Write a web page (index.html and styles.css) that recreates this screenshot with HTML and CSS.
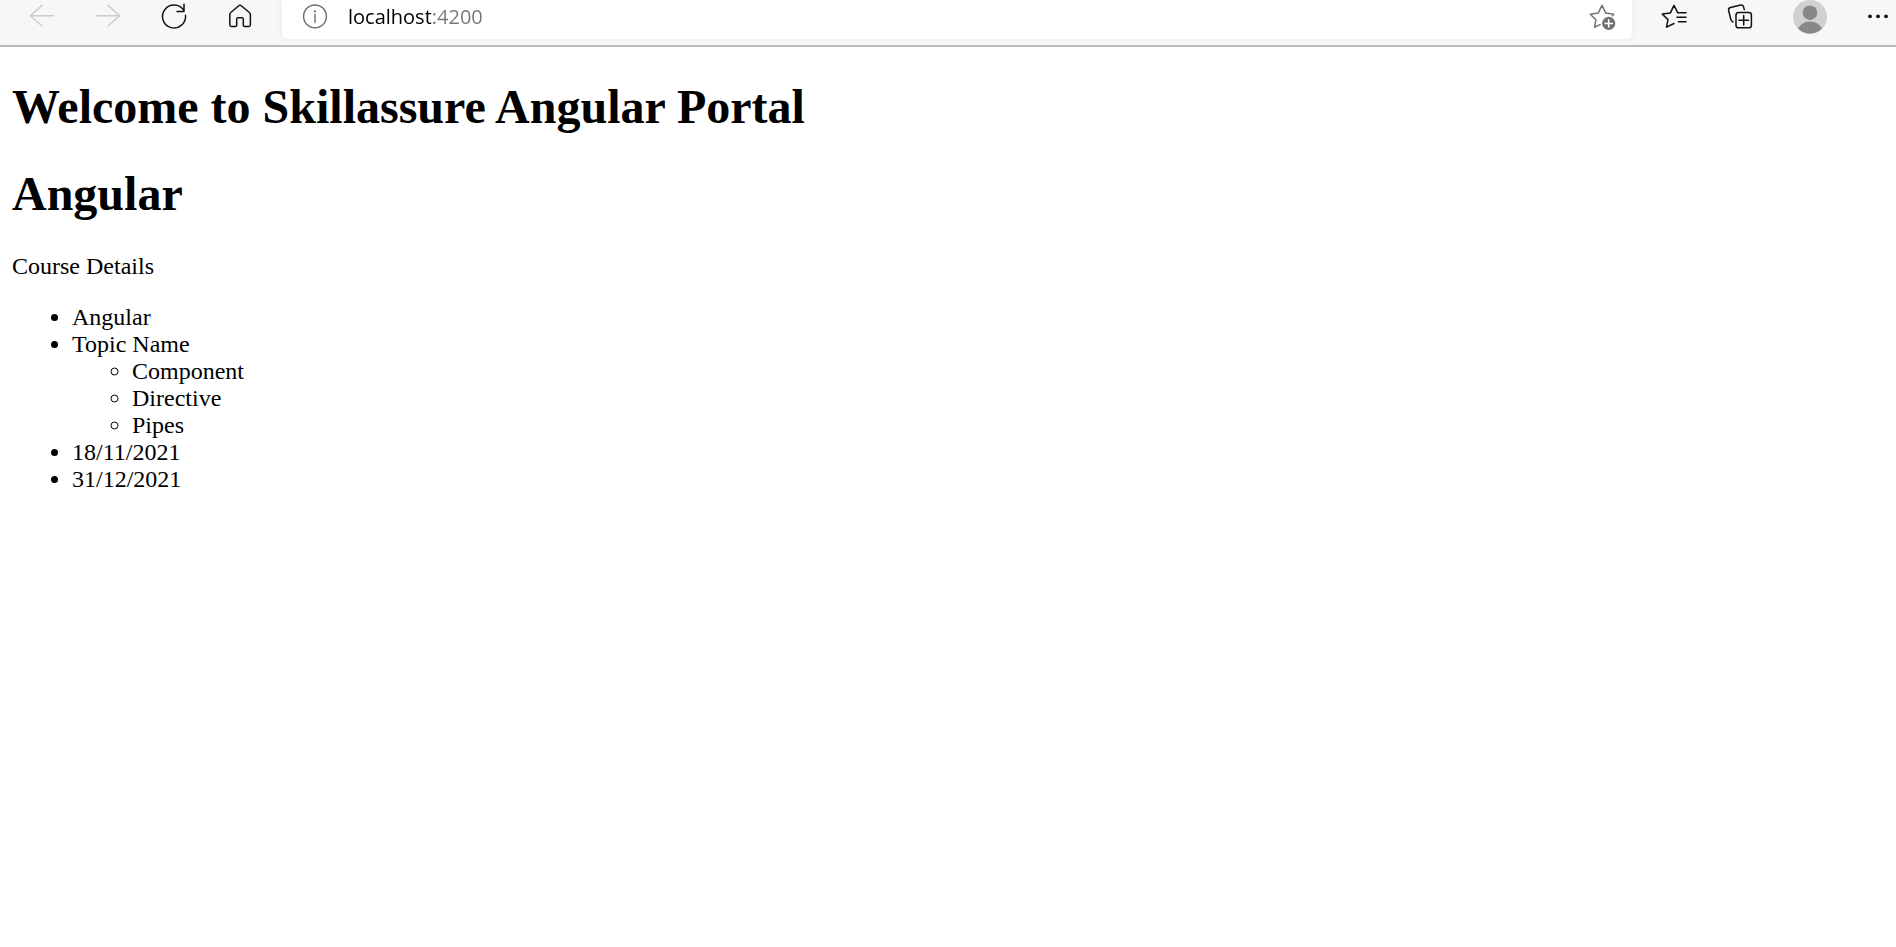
FILE: index.html
```
<!DOCTYPE html>
<html lang="en">
<head>
<meta charset="utf-8">
<title>Skillassure Angular Portal</title>
<link rel="stylesheet" href="styles.css">
</head>
<body>
<header class="toolbar">
  <nav class="nav-buttons" aria-label="Navigation">
    <button class="tool" type="button" aria-label="Back" disabled>
      <svg class="icon" viewBox="0 0 36 32"><path d="M29.5 15.7H6.3M18 5.4L6.3 15.7 18 26"/></svg>
    </button>
    <button class="tool" type="button" aria-label="Forward" disabled>
      <svg class="icon" viewBox="0 0 36 32"><path d="M6.3 15.7h23.3M18 5.4l11.7 10.3L18 26"/></svg>
    </button>
    <button class="tool" type="button" aria-label="Refresh">
      <svg class="icon" viewBox="0 0 36 32"><path d="M29.5 15.2A11.5 11.5 0 1 1 27.7 10.2M28 4.2v7.2h-7"/></svg>
    </button>
    <button class="tool" type="button" aria-label="Home">
      <svg class="icon" viewBox="0 0 36 32"><path d="M17.1 5.5q.9-.7 1.8 0l8.5 7q1 .8 1 2v10.2q0 1.7-1.7 1.7h-3.9q-1.5 0-1.5-1.5v-5.6q0-1.5-1.5-1.5h-3.6q-1.5 0-1.5 1.5v5.6q0 1.5-1.5 1.5H9.5q-1.7 0-1.7-1.7V14.5q0-1.2 1-2z"/></svg>
    </button>
  </nav>
  <div class="address">
    <button class="tool muted" type="button" aria-label="View site information">
      <svg class="icon" viewBox="0 0 36 32"><circle cx="18" cy="16.4" r="11.4"/><path d="M18 14.6v7.6"/><circle class="solid" cx="18" cy="11.4" r="1.1"/></svg>
    </button>
    <input class="url" type="text" aria-label="Address" value="localhost:4200" spellcheck="false">
    <button class="tool muted" type="button" aria-label="Add this page to favorites">
      <svg class="icon" viewBox="0 0 36 32"><path d="M28.4 15.8l1.3-1.6-7.9-1.1L18 5.4l-3.8 7.7-7.9 1.1 5.6 5.6-1.4 7.5 5.6-2.7"/><circle class="solid" cx="24.7" cy="23.4" r="6.6"/><path class="plus" d="M24.7 19.8V27M21.1 23.4h7.2"/></svg>
    </button>
  </div>
  <div class="actions">
    <button class="tool" type="button" aria-label="Favorites">
      <svg class="icon" viewBox="0 0 36 32"><path d="M30 12.8h-8.2L18 5.4l-3.6 7.5-8.1 1.2 5.7 5.5-1.5 7.6 7.5-3.7M21 17.3h9M22.5 21.7H30"/></svg>
    </button>
    <button class="tool" type="button" aria-label="Collections">
      <svg class="icon" viewBox="0 0 36 32"><rect x="12" y="12.4" width="15.4" height="15.4" rx="2.6"/><path d="M19.7 15.4v9.6M14.9 20.2h9.6M20.3 9.6l-.9-3.1q-.6-2-2.6-1.5L6.5 7.4q-2.3.6-1.9 2.9l2.2 9.1q.4 1.8 2.2 2.6"/></svg>
    </button>
    <button class="tool profile" type="button" aria-label="Profile">
      <svg class="avatar" viewBox="0 0 34 34"><defs><clipPath id="disc"><circle cx="17" cy="17" r="16.5"/></clipPath></defs><circle cx="17" cy="17" r="17" fill="#d2d0ce"/><g clip-path="url(#disc)" fill="#8a8886"><circle cx="17" cy="12.7" r="7.3"/><ellipse cx="17" cy="33" rx="13" ry="11.4"/></g></svg>
    </button>
    <button class="tool" type="button" aria-label="Settings and more">
      <svg class="icon" viewBox="0 0 36 32"><g class="solid"><circle cx="10" cy="16.3" r="1.9"/><circle cx="18" cy="16.3" r="1.9"/><circle cx="26" cy="16.3" r="1.9"/></g></svg>
    </button>
  </div>
</header>
<main class="page">
  <h1 class="title">Welcome to Skillassure Angular Portal</h1>
  <h1 class="title">Angular</h1>
  <div>Course Details</div>
  <ul class="course">
    <li>Angular</li>
    <li>Topic Name
      <ul class="topics">
        <li>Component</li>
        <li>Directive</li>
        <li>Pipes</li>
      </ul>
    </li>
    <li>18/11/2021</li>
    <li>31/12/2021</li>
  </ul>
</main>
</body>
</html>
```
FILE: styles.css
```
* {
  box-sizing: border-box;
}

body {
  margin: 0;
  background: #fff;
  color: #000;
  font-family: "Liberation Serif", "Times New Roman", serif;
  font-size: 24px;
  line-height: 27px;
}

.toolbar {
  display: flex;
  align-items: flex-start;
  gap: 24px;
  padding: 0 0 6px 24px;
  background: #f7f7f7;
  border-bottom: 2px solid #bbb;
}

.nav-buttons {
  display: flex;
  gap: 30px;
}

.actions {
  display: flex;
  gap: 32px;
}

.tool {
  flex: none;
  display: flex;
  align-items: center;
  justify-content: center;
  width: 36px;
  height: 32px;
  padding: 0;
  border: 0;
  background: none;
  color: #111;
}

.tool:disabled {
  color: #ccc;
}

.muted {
  color: #737373;
}

.profile {
  height: 34px;
}

.icon {
  width: 36px;
  height: 32px;
  fill: none;
  stroke: currentColor;
  stroke-width: 1.5;
  stroke-linecap: round;
  stroke-linejoin: round;
}

.solid {
  fill: currentColor;
  stroke: none;
}

.plus {
  stroke: #fff;
}

.avatar {
  width: 34px;
  height: 34px;
}

.address {
  flex: 1;
  display: flex;
  gap: 15px;
  min-width: 0;
  padding: 0 12px 7px 15px;
  background: #fff;
  border-radius: 0 0 6px 6px;
  box-shadow: 0 0 8px rgba(0, 0, 0, 0.06);
}

.url {
  flex: 1;
  min-width: 0;
  height: 32px;
  padding: 0;
  border: 0;
  outline: 0;
  font-family: "Open Sans", "Noto Sans", sans-serif;
  font-size: 20px;
  color: #000;
  background: linear-gradient(90deg, #000 83px, #767676 83px) text;
  -webkit-text-fill-color: transparent;
}

.page {
  padding: 32px 12px;
}

.title {
  margin: 0 0 32px;
  font-size: 48px;
  line-height: 55px;
}

.course {
  margin: 24px 0;
  padding-left: 60px;
}

.topics {
  margin: 0;
  padding-left: 60px;
}
```
